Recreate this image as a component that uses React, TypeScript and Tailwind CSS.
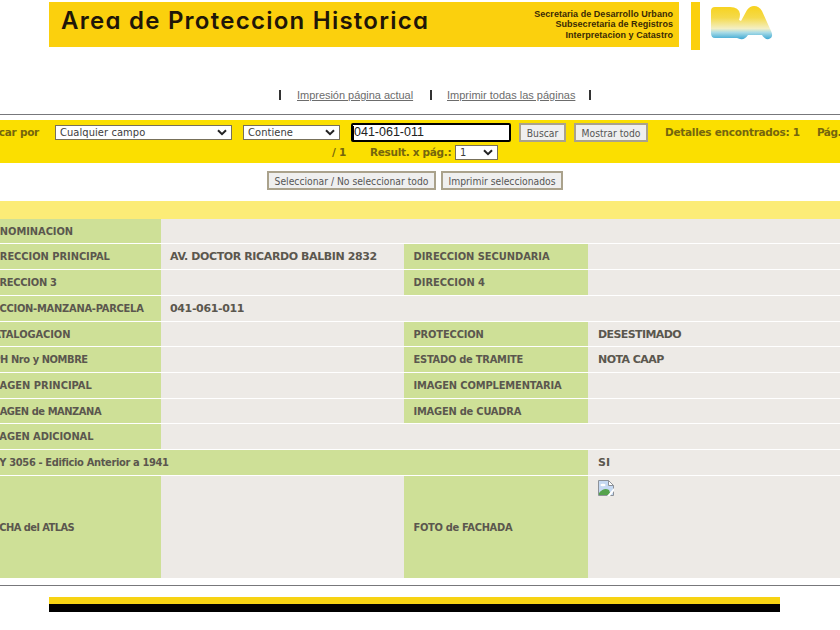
import type { ReactNode } from "react";

const COND = "font-['DejaVu_Sans_Condensed','DejaVu_Sans',sans-serif]";
const WIDE = "font-['DejaVu_Sans',sans-serif]";

type Cell = { text: string; cls: string };

type Row = {
  height: string;
  label: Cell;
  value?: Cell;
  label2?: Cell;
  value2?: Cell;
  wideLabel?: boolean;
};

const rows: Row[] = [
  { height: "h-[25px]", label: { text: "DENOMINACION", cls: "tracking-[-0.06px] -ml-[15px]" } },
  {
    height: "h-[26px]",
    label: { text: "DIRECCION PRINCIPAL", cls: "tracking-[-0.04px] -ml-[12px]" },
    value: { text: "AV. DOCTOR RICARDO BALBIN 2832", cls: "tracking-[-0.39px]" },
    label2: { text: "DIRECCION SECUNDARIA", cls: "tracking-[-0.04px]" },
  },
  {
    height: "h-[26px]",
    label: { text: "DIRECCION 3", cls: "tracking-[-0.25px] -ml-[12px]" },
    label2: { text: "DIRECCION 4", cls: "" },
  },
  {
    height: "h-[26px]",
    label: { text: "SECCION-MANZANA-PARCELA", cls: "tracking-[-0.24px] -ml-[14px]" },
    value: { text: "041-061-011", cls: "tracking-[-0.36px]" },
  },
  {
    height: "h-[25px]",
    label: { text: "CATALOGACION", cls: "tracking-[-0.08px] -ml-[14px]" },
    label2: { text: "PROTECCION", cls: "tracking-[-0.15px]" },
    value2: { text: "DESESTIMADO", cls: "tracking-[-0.6px]" },
  },
  {
    height: "h-[26px]",
    label: { text: "APH Nro y NOMBRE", cls: "tracking-[-0.42px] -ml-[14px]" },
    label2: { text: "ESTADO de TRAMITE", cls: "tracking-[-0.25px]" },
    value2: { text: "NOTA CAAP", cls: "tracking-[-0.55px]" },
  },
  {
    height: "h-[26px]",
    label: { text: "IMAGEN PRINCIPAL", cls: "-ml-[14px]" },
    label2: { text: "IMAGEN COMPLEMENTARIA", cls: "tracking-[-0.14px]" },
  },
  {
    height: "h-[25px]",
    label: { text: "IMAGEN de MANZANA", cls: "tracking-[-0.44px] -ml-[13px]" },
    label2: { text: "IMAGEN de CUADRA", cls: "tracking-[-0.22px]" },
  },
  { height: "h-[26px]", label: { text: "IMAGEN ADICIONAL", cls: "tracking-[-0.1px] -ml-[14px]" } },
  {
    height: "h-[26px]",
    label: { text: "LEY 3056 - Edificio Anterior a 1941", cls: "tracking-[-0.35px] -ml-[13px]" },
    value2: { text: "SI", cls: "" },
    wideLabel: true,
  },
];

function Text({ font, cell }: { font: string; cell?: Cell }) {
  if (!cell) return null;
  return <span className={`pt-[2px] text-[11px] font-bold text-[#5b574e] whitespace-nowrap ${font} ${cell.cls}`}>{cell.text}</span>;
}

function Label({ width, pad, children }: { width: string; pad?: boolean; children?: ReactNode }) {
  return <div className={`flex items-center shrink-0 overflow-hidden bg-[#cee097] ${width} ${pad ? "pl-[9.5px]" : ""}`}>{children}</div>;
}

function DataRow({ row }: { row: Row }) {
  return (
    <div className={`flex border-b border-white ${row.height}`}>
      {row.wideLabel ? (
        <Label width="w-[588px]">
          <Text font={COND} cell={row.label} />
        </Label>
      ) : (
        <>
          <Label width="w-[161px]">
            <Text font={COND} cell={row.label} />
          </Label>
          <div className="flex items-center w-[243px] shrink-0 pl-[9px]">
            <Text font={WIDE} cell={row.value} />
          </div>
          {row.label2 && (
            <Label width="w-[184px]" pad>
              <Text font={COND} cell={row.label2} />
            </Label>
          )}
        </>
      )}
      <div className="flex items-center pl-[10px]">
        <Text font={WIDE} cell={row.value2} />
      </div>
    </div>
  );
}

function Select({ width, children }: { width: string; children: ReactNode }) {
  return (
    <div className={`flex items-center justify-between shrink-0 h-[15px] pl-1 pr-[4px] bg-white border border-[#77705a] text-[11px] text-[#3c3c3c] tracking-[0.08px] ${COND} ${width}`}>
      <span className="leading-none">{children}</span>
      <svg width="10" height="7" viewBox="0 0 10 7" fill="none" stroke="#222" strokeWidth="2">
        <path d="M1 1.2 5 5.2 9 1.2" />
      </svg>
    </div>
  );
}

function Button({ width, children }: { width: string; children: ReactNode }) {
  return (
    <button className={`flex items-center justify-center shrink-0 h-[19px] pt-px bg-[#efefef] border-2 border-[#aaa28c] text-[10.25px] leading-none text-[#555] whitespace-nowrap ${COND} ${width}`}>
      {children}
    </button>
  );
}

function Logo() {
  return (
    <svg className="ml-[10px] mt-[3px]" width="64" height="36" viewBox="0 0 64 36">
      <defs>
        <linearGradient id="sky" x1="0" y1="0" x2="0" y2="1">
          <stop offset="0" stopColor="#f7d21c" />
          <stop offset="0.35" stopColor="#f5da4a" />
          <stop offset="0.68" stopColor="#f3efc4" />
          <stop offset="0.8" stopColor="#a9dbe6" />
          <stop offset="1" stopColor="#3fa9d4" />
        </linearGradient>
      </defs>
      <path
        fill="url(#sky)"
        d="M1 6Q1 2 5 2H20Q29 2 30 9Q30 12 29 15L31 16L37 5Q40 1 44 1Q49 1 52 6L61 26Q64 32 59 34Q55 35 52 30H38Q35 35 30 34L27 33H5Q1 33 1 28Z"
      />
    </svg>
  );
}

function BrokenImage() {
  return (
    <svg width="16" height="16" viewBox="0 0 16 16">
      <path d="M.5.5H10.5L15.5 5.5V15.5H.5Z" fill="#c5d9f2" stroke="#8d9299" />
      <path d="M10.5.5V5.5H15.5Z" fill="#fff" stroke="#8d9299" />
      <ellipse cx="5" cy="5" rx="2.6" ry="1.3" fill="#fff" />
      <path d="M1 15V13Q6 7 11 10L13 15Z" fill="#55a24c" />
      <path d="M9 16 16 8V11L12 16Z" fill="#fff" />
    </svg>
  );
}

export default function App() {
  return (
    <div className="h-[630px] w-[840px] overflow-hidden bg-white">
      <header className="flex h-[84px] pt-[2px] pl-[49px]">
        <div className="flex justify-between w-[630px] h-[45px] pl-[12px] pr-[6px] bg-[#fbd00d]">
          <h1 className="mt-[4px] text-[24px] leading-[30px] font-semibold text-[#1f1608] whitespace-nowrap tracking-[1.25px] font-['Inter',sans-serif] [font-feature-settings:'cv11']">
            Area de Proteccion Historica
          </h1>
          <div className="mt-[7px] text-right text-[9px] leading-[10.3px] font-bold text-[#3a2a05] whitespace-nowrap tracking-[0.04px] font-['Liberation_Sans',sans-serif]">
            <p>Secretaria de Desarrollo Urbano</p>
            <p>Subsecretaria de Registros</p>
            <p>Interpretacion y Catastro</p>
          </div>
        </div>
        <div className="ml-[12px] w-[9px] h-[48px] bg-[#fbd00d]" />
        <Logo />
      </header>

      <nav className="flex items-center h-[22px] pl-[279px] text-[11px] text-[#6c6c6c] whitespace-nowrap font-['Liberation_Sans',sans-serif]">
        <i className="w-[2px] h-[10px] bg-[#333]" />
        <a className="ml-[16px] w-[116px] underline tracking-[-0.03px]">Impresión página actual</a>
        <i className="ml-[17px] w-[2px] h-[10px] bg-[#333]" />
        <a className="ml-[15px] w-[129px] underline">Imprimir todas las páginas</a>
        <i className="ml-[13px] w-[2px] h-[10px] bg-[#333]" />
      </nav>

      <div className="mt-[8px] h-px bg-[#77777b]" />

      <section className={`mt-[5px] h-[43px] bg-[#fbdf00] text-[10.5px] font-bold text-[#75660d] tracking-[-0.27px] whitespace-nowrap ${WIDE}`}>
        <div className="flex items-center h-[24px] pt-px">
          <div className="flex justify-end w-[39px] shrink-0">Buscar por</div>
          <div className="flex ml-[16px] font-normal tracking-normal">
            <Select width="w-[177px]">Cualquier campo</Select>
            <div className="w-[11px]" />
            <Select width="w-[97px]">Contiene</Select>
          </div>
          <div className="ml-[11px] flex items-center w-[160px] h-[19px] shrink-0 bg-white border-2 border-black rounded-[2px] text-[12.5px] font-normal tracking-normal text-[#222] font-['Liberation_Sans',sans-serif]">
            <span className="w-px h-[14px] bg-black" />
            041-061-011
          </div>
          <div className="flex ml-[8px] gap-[8px] font-normal tracking-normal">
            <Button width="w-[47px]">Buscar</Button>
            <Button width="w-[74px]">Mostrar todo</Button>
          </div>
          <span className="ml-[17px]">Detalles encontrados: 1</span>
          <span className="ml-[17px] tracking-[-0.5px]">Pág.</span>
        </div>
        <div className="flex items-center h-[17px] pl-[332px]">
          <span className="pt-px">/ 1</span>
          <span className="ml-[24px] w-[85px] pt-px tracking-[-0.3px]">Result. x pág.:</span>
          <div className="font-normal tracking-normal">
            <Select width="w-[43px]">1</Select>
          </div>
        </div>
      </section>

      <div className="flex gap-[5px] mt-[8px] pl-[267px]">
        <Button width="w-[169px]">Seleccionar / No seleccionar todo</Button>
        <Button width="w-[122px]">Imprimir seleccionados</Button>
      </div>

      <main className="mt-[11px] bg-[#edeae6]">
        <div className="h-[18px] bg-[#fcec77]" />
        {rows.map((row) => (
          <DataRow key={row.label.text} row={row} />
        ))}
        <div className="flex h-[102px]">
          <Label width="w-[161px]">
            <Text font={COND} cell={{ text: "FICHA del ATLAS", cls: "tracking-[-0.55px] -ml-[10px]" }} />
          </Label>
          <div className="w-[243px]" />
          <Label width="w-[184px]" pad>
            <Text font={COND} cell={{ text: "FOTO de FACHADA", cls: "tracking-[-0.3px]" }} />
          </Label>
          <div className="pl-[10px] pt-[4px]">
            <BrokenImage />
          </div>
        </div>
      </main>

      <div className="mt-[7px] h-px bg-[#77777b]" />
      <footer className="mt-[11px] ml-[49px] w-[731px] h-[15px] bg-black border-t-[7px] border-[#f7d313]" />
    </div>
  );
}
